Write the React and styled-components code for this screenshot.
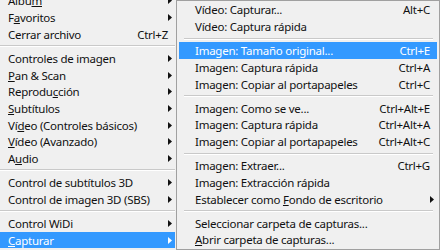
import styled, { createGlobalStyle } from "styled-components";

const ROW = 16.67;
const SEP = 7.5;
const HILITE = "#3399ff";

const GlobalStyle = createGlobalStyle`
  body {
    margin: 0;
    background: #f0f0f0;
    font-family: "Noto Sans", "Open Sans", sans-serif;
  }
`;

const Screen = styled.div`
  width: 440px;
  height: 250px;
  display: flex;
  align-items: flex-end;
  overflow: hidden;
  background: #f0f0f0;
`;

const MainMenu = styled.div`
  width: 176px;
  flex-shrink: 0;
  display: flex;
  flex-direction: column;
  padding: 0 1px 1.67px 0;
  box-sizing: border-box;
`;

const SubMenu = styled.div`
  flex: 1;
  align-self: stretch;
  display: flex;
  flex-direction: column;
  padding: 0.67px 2px;
  border: 1px solid #a0a0a0;
  box-sizing: border-box;
  background: #f0f0f0;
`;

const Item = styled.div`
  display: flex;
  align-items: center;
  height: ${ROW}px;
  padding: 0 3px 0 ${(props) => props.$indent}px;
  font-size: 11.5px;
  letter-spacing: -0.25px;
  color: ${(props) => (props.$active ? "#fff" : "#111")};
  background: ${(props) => (props.$active ? HILITE : "transparent")};
  white-space: nowrap;
`;

const Label = styled.span`
  flex: 1;
`;

const Shortcut = styled.span`
  margin-right: 4px;
`;

const Separator = styled.div`
  height: ${SEP}px;
  display: flex;
  align-items: center;
  padding: 0 ${(props) => props.$right}px 0 ${(props) => props.$left}px;

  &::before {
    content: "";
    flex: 1;
    height: 1px;
    background: #c9c9c9;
    border-bottom: 1px solid #fff;
  }
`;

const ArrowIcon = styled.svg`
  flex-shrink: 0;
  fill: currentColor;
`;

function Arrow() {
  return (
    <ArrowIcon width="4" height="7" viewBox="0 0 4 7">
      <path d="M0 0 L4 3.5 L0 7 Z" />
    </ArrowIcon>
  );
}

function MenuItem({ label, shortcut, submenu, active, indent }) {
  return (
    <Item $active={active} $indent={indent}>
      <Label>{label}</Label>
      {shortcut && <Shortcut>{shortcut}</Shortcut>}
      {submenu && <Arrow />}
    </Item>
  );
}

const mainItems = [
  { label: <>Álbu<u>m</u></>, submenu: true },
  { label: <>F<u>a</u>voritos</>, submenu: true },
  { label: "Cerrar archivo", shortcut: "Ctrl+Z" },
  "sep",
  { label: "Controles de imagen", submenu: true },
  { label: <><u>P</u>an &amp; Scan</>, submenu: true },
  { label: <>Reprodu<u>c</u>ción</>, submenu: true },
  { label: <><u>S</u>ubtítulos</>, submenu: true },
  { label: <>Ví<u>d</u>eo (Controles básicos)</>, submenu: true },
  { label: <><u>V</u>ídeo (Avanzado)</>, submenu: true },
  { label: <>A<u>u</u>dio</>, submenu: true },
  "sep",
  { label: "Control de subtítulos 3D", submenu: true },
  { label: "Control de imagen 3D (SBS)", submenu: true },
  "sep",
  { label: "Control WiDi", submenu: true },
  { label: <><u>C</u>apturar</>, submenu: true, active: true },
];

const captureItems = [
  { label: "Vídeo: Capturar...", shortcut: "Alt+C" },
  { label: "Vídeo: Captura rápida" },
  "sep",
  { label: "Imagen: Tamaño original...", shortcut: "Ctrl+E", active: true },
  { label: "Imagen: Captura rápida", shortcut: "Ctrl+A" },
  { label: "Imagen: Copiar al portapapeles", shortcut: "Ctrl+C" },
  "sep",
  { label: "Imagen: Como se ve...", shortcut: "Ctrl+Alt+E" },
  { label: "Imagen: Captura rápida", shortcut: "Ctrl+Alt+A" },
  { label: "Imagen: Copiar al portapapeles", shortcut: "Ctrl+Alt+C" },
  "sep",
  { label: "Imagen: Extraer...", shortcut: "Ctrl+G" },
  { label: "Imagen: Extracción rápida" },
  { label: <>Establecer como <u>F</u>ondo de escritorio</>, submenu: true },
  "sep",
  { label: "Seleccionar carpeta de capturas..." },
  { label: <><u>A</u>brir carpeta de capturas...</> },
];

export default function App() {
  return (
    <>
      <GlobalStyle />
      <Screen>
        <MainMenu>
          {mainItems.map((item, i) =>
            item === "sep" ? (
              <Separator key={i} $left={0} $right={0} />
            ) : (
              <MenuItem key={i} indent={8} {...item} />
            )
          )}
        </MainMenu>
        <SubMenu>
          {captureItems.map((item, i) =>
            item === "sep" ? (
              <Separator key={i} $left={5} $right={4} />
            ) : (
              <MenuItem key={i} indent={16} {...item} />
            )
          )}
        </SubMenu>
      </Screen>
    </>
  );
}
